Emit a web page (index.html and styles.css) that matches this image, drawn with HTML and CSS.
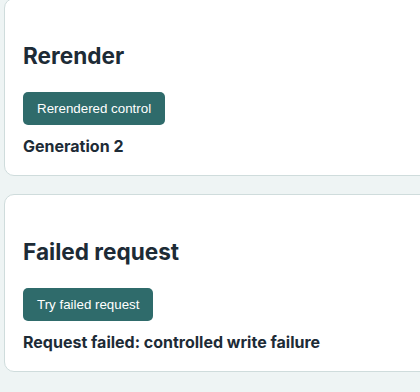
FILE: index.html
```html
<!DOCTYPE html>
<html lang="en">
<head>
<meta charset="utf-8">
<link rel="stylesheet" href="styles.css">
</head>
<body>
<main class="stack">
  <section class="card">
    <h2 class="card-title">Rerender</h2>
    <button class="btn" type="button">Rerendered control</button>
    <p class="status">Generation 2</p>
  </section>
  <section class="card">
    <h2 class="card-title">Failed request</h2>
    <button class="btn" type="button">Try failed request</button>
    <p class="status">Request failed: controlled write failure</p>
  </section>
</main>
</body>
</html>
```
FILE: styles.css
```css
html, body {
  margin: 0;
  padding: 0;
  background: #eef4f4;
  overflow: hidden;
}
body {
  font-family: Inter, "Noto Sans", sans-serif;
  color: #1d2b36;
}
.stack {
  display: flex;
  flex-direction: column;
  gap: 18px;
  padding-left: 4px;
  margin-top: -2px;
  width: 460px;
}
.card {
  background: #ffffff;
  border: 1px solid #cfdcdc;
  border-radius: 10px;
  padding: 0 18px 19px;
  display: flex;
  flex-direction: column;
  align-items: flex-start;
}
.card-title {
  font-size: 22.6px;
  font-weight: 700;
  line-height: 27px;
  margin: 43px 0 23px;
  color: #1d2b36;
}
.btn {
  font-family: "Liberation Sans", Arial, sans-serif;
  font-size: 13.33px;
  line-height: 15px;
  color: #ffffff;
  background: #2f6b6b;
  border: none;
  border-radius: 5px;
  padding: 9px 14px 9px;
  cursor: pointer;
}
.status {
  margin: 12px 0 0;
  font-size: 16px;
  font-weight: 700;
  line-height: 19px;
  color: #1d2b36;
}
```
